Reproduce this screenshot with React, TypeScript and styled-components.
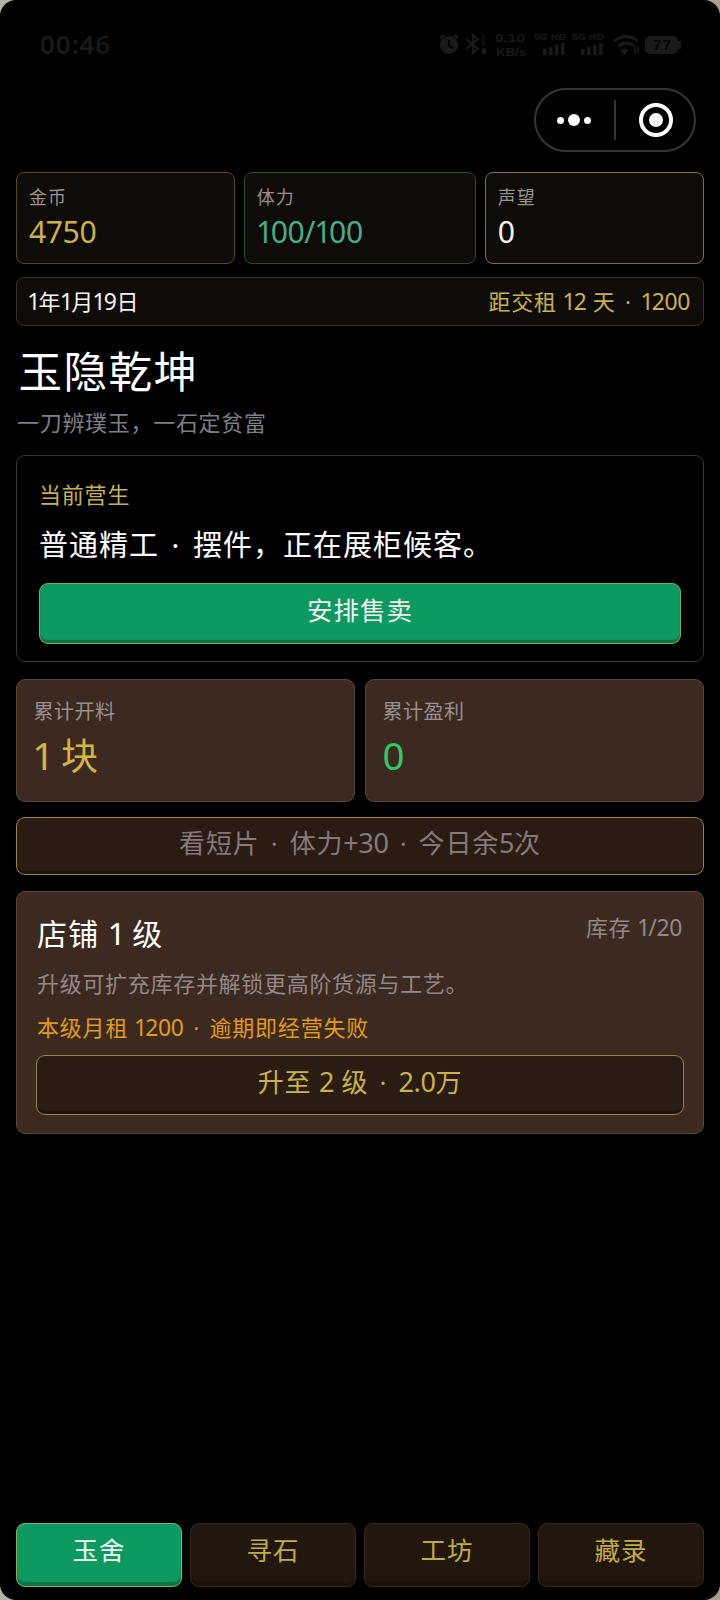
import React from "react";
import styled, { createGlobalStyle } from "styled-components";

const GlobalStyle = createGlobalStyle`
  * { box-sizing: border-box; }
  body {
    margin: 0;
    background: linear-gradient(to right, #b3b3a2 0 50%, #ac9f97 50%);
    font-family: "Noto Sans", "Noto Sans CJK SC", sans-serif;
  }
  button { font-family: inherit; margin: 0; padding: 0; }
`;

const gold = "#c9b24c";
const muted = "#928889";

const Screen = styled.div`
  width: 720px;
  height: 1600px;
  display: flex;
  flex-direction: column;
  background: #000;
  border-radius: 16px;
  overflow: hidden;
`;

const StatusBar = styled.header`
  height: 88px;
  padding: 0 40px;
  display: flex;
  align-items: center;
  justify-content: space-between;
  color: #1b1b1b;
`;

const Clock = styled.span`
  font: 600 26px/30px "Open Sans", sans-serif;
  letter-spacing: 0.9px;
`;

const StatusIcons = styled.svg`
  display: block;
  margin-right: -1px;
  font-family: "Liberation Sans", sans-serif;
  font-weight: 600;
`;

const MenuRow = styled.div`
  display: flex;
  justify-content: flex-end;
  height: 84px;
  padding-right: 24px;
`;

const Capsule = styled.div`
  display: flex;
  align-items: center;
  width: 162px;
  height: 64px;
  border: 2px solid #363636;
  border-radius: 32px;
`;

const CapsuleHalf = styled.div`
  flex: 1;
  display: flex;
  align-items: center;
  justify-content: center;
  gap: 4px;
  &:first-child { padding-right: 2px; }
  &:last-child { padding-left: 2px; }
`;

const CapsuleDivider = styled.div`
  width: 1.5px;
  height: 40px;
  background: #363636;
`;

const Dot = styled.i<{ $size: number }>`
  width: ${(p) => p.$size}px;
  height: ${(p) => p.$size}px;
  border-radius: 50%;
  background: #fff;
`;

const Ring = styled.div`
  display: flex;
  align-items: center;
  justify-content: center;
  width: 34px;
  height: 34px;
  border: 4px solid #fff;
  border-radius: 50%;
`;

const Content = styled.main`
  flex: 1;
  display: flex;
  flex-direction: column;
  padding: 0 16px;
`;

const Line = styled.span<{ $size: number; $line: number; $color?: string; $spacing?: number }>`
  display: block;
  font-size: ${(p) => p.$size}px;
  line-height: ${(p) => p.$line}px;
  color: ${(p) => p.$color ?? "#f4f2ef"};
  letter-spacing: ${(p) => p.$spacing ?? 0}px;
  white-space: nowrap;
`;

const Figures = styled.span`
  font-size: 1.04em;
  letter-spacing: -0.015em;
`;

const One = styled.span`
  margin-left: -0.03em;
  letter-spacing: -0.08em;
`;

const Separator = styled.span`
  padding: 0 0.14em;
`;

const Resources = styled.section`
  display: grid;
  grid-template-columns: 219fr 232fr 219fr;
  gap: 8.5px;
`;

const Resource = styled.div<{ $border: string }>`
  height: 92px;
  padding: 12px 12px;
  border: 1px solid ${(p) => p.$border};
  border-radius: 8px;
  background: #0f0b09;
`;

const DateBar = styled.section`
  display: flex;
  justify-content: space-between;
  height: 49px;
  margin-top: 13px;
  padding: 6px 13px 0 11px;
  border: 1px solid #38332a;
  border-radius: 8px;
  background: #0f0b09;
`;

const Heading = styled.section`
  height: 129px;
  padding: 15px 1px 0;
`;

const Title = styled.h1`
  margin: 0;
  padding-left: 1.5px;
  font-weight: 400;
`;

const TaskCard = styled.section`
  height: 207px;
  padding: 23px 22px 0;
  border: 1px solid #393725;
  border-radius: 9px;
`;

const TaskText = styled.div`
  height: 104px;
`;

const Button = styled.button<{ $primary?: boolean; $height: number }>`
  display: flex;
  justify-content: center;
  width: 100%;
  height: ${(p) => p.$height}px;
  border: 1px solid ${(p) => (p.$primary ? "#81a95b" : "#998640")};
  border-radius: 9px;
  background: ${(p) => (p.$primary ? "#0d9a61" : "#2a1c12")};
  box-shadow: inset 0 -3px 1px ${(p) => (p.$primary ? "#0b7044" : "#21130c")};
`;

const Totals = styled.section`
  display: grid;
  grid-template-columns: 1fr 1fr;
  gap: 10px;
  margin: 17px 0 15px;
`;

const Total = styled.div`
  height: 123px;
  padding: 18px 16.5px;
  border: 1px solid #5a482b;
  border-radius: 9px;
  background: #3c2a20;
`;

const ShopCard = styled.section`
  height: 243px;
  margin-top: 16px;
  padding: 20px 19px 0;
  border: 1px solid #57462c;
  border-radius: 9px;
  background: #3c2a20;
`;

const ShopHead = styled.div`
  display: flex;
  justify-content: space-between;
  padding: 0 2px 0 1px;
`;

const ShopNotes = styled.div`
  height: 100px;
  padding: 4px 1px 0;
`;

const Tabs = styled.nav`
  display: grid;
  grid-template-columns: repeat(4, 1fr);
  gap: 8px;
  height: 77px;
  padding: 0 16px 13px;
`;

const Tab = styled.button<{ $active?: boolean }>`
  display: flex;
  justify-content: center;
  padding-top: 7px;
  border: 1px solid ${(p) => (p.$active ? "#8fae58" : "#39291b")};
  border-radius: 9px;
  background: ${(p) => (p.$active ? "#0d9a61" : "#22170f")};
  box-shadow: inset 0 -4px 1px ${(p) => (p.$active ? "#0b7644" : "#1b110b")};
`;

type TextProps = { size: number; line: number; color?: string; spacing?: number; children: string };

// Sets figures a little larger and tighter than the characters around them.
function Text({ size, line, color, spacing, children }: TextProps) {
  return (
    <Line $size={size} $line={line} $color={color} $spacing={spacing}>
      {children.split(/(·|[0-9./+]+)/).map((part, i) => {
        if (part === "·") return <Separator key={i}>·</Separator>;
        if (i % 2 === 0) return part;
        return (
          <Figures key={i}>
            {part.split(/(1)/).map((s, j) => (s === "1" ? <One key={j}>1</One> : s))}
          </Figures>
        );
      })}
    </Line>
  );
}

const resources = [
  { label: "金币", value: "4750", color: gold, border: "#544a1f" },
  { label: "体力", value: "100/100", color: "#4bac83", border: "#1b4f39" },
  { label: "声望", value: "0", color: "#f4f2ef", border: "#74706e" },
];

const totals = [
  { label: "累计开料", value: "1 块", color: "#d3b545" },
  { label: "累计盈利", value: "0", color: "#2fc866" },
];

const tabs = ["玉舍", "寻石", "工坊", "藏录"];

const signal = [6, 8, 10, 12];

function StatusGlyphs() {
  return (
    <StatusIcons width="243" height="30" viewBox="437 30 243 30" fill="#1a1a1a">
      <circle cx="448" cy="46" r="9" />
      <path d="M439 39l4-3M457 39l-4-3" stroke="#1a1a1a" strokeWidth="3" />
      <path d="M448 41v6l4 2" stroke="#000" strokeWidth="2" fill="none" />
      <path d="M465 40l12 10-5 4V36l5 4-12 10" stroke="#1a1a1a" strokeWidth="2" fill="none" />
      <rect x="481" y="36" width="3" height="11" opacity=".5" />
      <rect x="481" y="49" width="4" height="6" rx="1" />
      <text x="494" y="43" fontSize="11.500" textLength="30" lengthAdjust="spacingAndGlyphs">0.10</text>
      <text x="495" y="57" fontSize="11.500" textLength="30" lengthAdjust="spacingAndGlyphs">KB/s</text>
      <text x="533" y="41" fontSize="9.500" textLength="32" lengthAdjust="spacingAndGlyphs">5G HD</text>
      <text x="571" y="41" fontSize="9.500" textLength="32" lengthAdjust="spacingAndGlyphs">5G HD</text>
      {signal.map((h, i) => (
        <g key={h}>
          <rect x={542 + i * 6} y={56 - h} width="3.5" height={h} />
          <rect x={580 + i * 6} y={56 - h} width="3.5" height={h} />
        </g>
      ))}
      <path d="M613 42q12-9 24 0M617 47q8-6 16 0" stroke="#1a1a1a" strokeWidth="3" fill="none" />
      <path d="M619 51q5-3 9 0l-4.500 5z" />
      <path d="M634 47v7M637 47v7" stroke="#1a1a1a" strokeWidth="1.500" />
      <rect x="644" y="37" width="33" height="18" rx="5" />
      <rect x="677" y="42" width="3" height="8" rx="1" />
      <text x="652" y="51" fontSize="15" fill="#050505" textLength="18">77</text>
    </StatusIcons>
  );
}

export default function App() {
  return (
    <>
      <GlobalStyle />
      <Screen>
        <StatusBar>
          <Clock>00:46</Clock>
          <StatusGlyphs />
        </StatusBar>
        <MenuRow>
          <Capsule>
            <CapsuleHalf>
              <Dot $size={7} />
              <Dot $size={12} />
              <Dot $size={7} />
            </CapsuleHalf>
            <CapsuleDivider />
            <CapsuleHalf>
              <Ring>
                <Dot $size={14} />
              </Ring>
            </CapsuleHalf>
          </Capsule>
        </MenuRow>
        <Content>
          <Resources>
            {resources.map((r) => (
              <Resource key={r.label} $border={r.border}>
                <Text size={18} line={25} color="#98928e" spacing={1}>{r.label}</Text>
                <Text size={29} line={43} color={r.color}>{r.value}</Text>
              </Resource>
            ))}
          </Resources>
          <DateBar>
            <Text size={22} line={34}>1年1月19日</Text>
            <Text size={22} line={34} color={gold} spacing={0.7}>距交租 12 天 · 1200</Text>
          </DateBar>
          <Heading>
            <Title>
              <Text size={43.5} line={60} spacing={1.5} color="#fff">玉隐乾坤</Text>
            </Title>
            <Text size={22} line={42} spacing={0.7} color="#7f7f87">一刀辨璞玉，一石定贫富</Text>
          </Heading>
          <TaskCard>
            <TaskText>
              <Text size={22} line={31} spacing={0.8} color={gold}>当前营生</Text>
              <Text size={29} line={70} spacing={1} color="#fff">普通精工 · 摆件，正在展柜候客。</Text>
            </TaskText>
            <Button $primary $height={61}>
              <Text size={25.5} line={52} spacing={1}>安排售卖</Text>
            </Button>
          </TaskCard>
          <Totals>
            {totals.map((t) => (
              <Total key={t.label}>
                <Text size={20} line={27} spacing={0.5} color="#98908f">{t.label}</Text>
                <Text size={37} line={61} color={t.color}>{t.value}</Text>
              </Total>
            ))}
          </Totals>
          <Button $height={58}>
            <Text size={26} line={50} spacing={0.8} color="#85797b">看短片 · 体力+30 · 今日余5次</Text>
          </Button>
          <ShopCard>
            <ShopHead>
              <Text size={30} line={42} spacing={1.3} color="#fff">店铺 1 级</Text>
              <Text size={22} line={31} spacing={0.7} color={muted}>库存 1/20</Text>
            </ShopHead>
            <ShopNotes>
              <Text size={22} line={49} spacing={0.7} color={muted}>升级可扩充库存并解锁更高阶货源与工艺。</Text>
              <Text size={22} line={39} spacing={0.8} color="#e09a1d">本级月租 1200 · 逾期即经营失败</Text>
            </ShopNotes>
            <Button $height={60}>
              <Text size={26} line={51} spacing={0.8} color={gold}>升至 2 级 · 2.0万</Text>
            </Button>
          </ShopCard>
        </Content>
        <Tabs>
          {tabs.map((name, i) => (
            <Tab key={name} $active={i === 0}>
              <Text size={25.5} line={39} spacing={1} color={i === 0 ? "#f0fff4" : "#c1ab45"}>{name}</Text>
            </Tab>
          ))}
        </Tabs>
      </Screen>
    </>
  );
}
